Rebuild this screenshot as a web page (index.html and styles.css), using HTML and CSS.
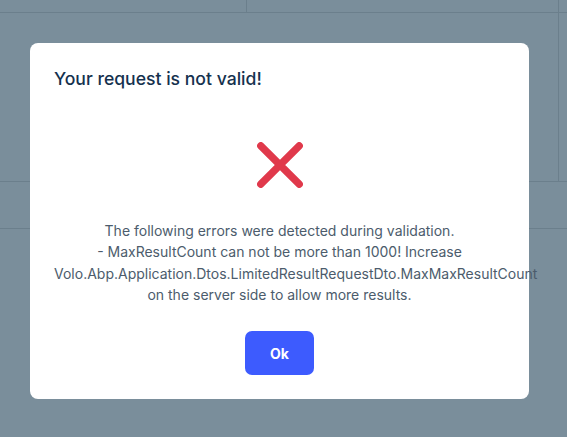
FILE: index.html
```html
<!DOCTYPE html>
<html lang="en">
<head>
<meta charset="utf-8">
<title>Validation error</title>
<link rel="stylesheet" href="styles.css">
</head>
<body>
<div class="page">
  <div class="row row-top">
    <div class="cell cell-a"></div>
    <div class="cell cell-b"></div>
    <div class="cell cell-c"></div>
  </div>
  <div class="row row-mid">
    <div class="cell cell-wide"></div>
    <div class="cell cell-c"></div>
  </div>
  <div class="row row-band"></div>
  <div class="row row-rest"></div>
</div>

<div class="modal" role="dialog">
  <h2 class="modal-title">Your request is not valid!</h2>
  <div class="modal-icon">
    <svg width="46" height="46" viewBox="0 0 46 46" aria-hidden="true">
      <path d="M3.8 3.8 L42.2 42.2 M42.2 3.8 L3.8 42.2" stroke="#e0394b" stroke-width="7.4" stroke-linecap="round" fill="none"/>
    </svg>
  </div>
  <p class="modal-text">The following errors were detected during validation.<br>- MaxResultCount can not be more than 1000! Increase Volo.Abp.Application.Dtos.LimitedResultRequestDto.MaxMaxResultCount on the server side to allow more results.</p>
  <div class="modal-actions">
    <button class="btn-ok" type="button">Ok</button>
  </div>
</div>
</body>
</html>
```
FILE: styles.css
```css
html, body {
  margin: 0;
  padding: 0;
  height: 100%;
}
body {
  background: #7a8e9b;
  font-family: Inter, "Noto Sans", "Liberation Sans", sans-serif;
  overflow: hidden;
}
.page {
  display: flex;
  flex-direction: column;
  height: 100%;
}
.row {
  display: flex;
  border-bottom: 1px solid #6b7f8c;
}
.row-top {
  height: 12px;
}
.row-mid {
  height: 168px;
}
.row-band {
  height: 46px;
}
.row-rest {
  flex: 1;
  border-bottom: none;
}
.cell {
  height: 100%;
}
.cell-a {
  width: 246px;
  border-right: 1px solid #6b7f8c;
}
.cell-b {
  width: 311px;
  border-right: 1px solid #6b7f8c;
}
.cell-wide {
  width: 558px;
  border-right: 1px solid #6b7f8c;
}
.cell-c {
  flex: 1;
}

.modal {
  position: absolute;
  left: 30px;
  top: 43px;
  width: 499px;
  box-sizing: border-box;
  background: #ffffff;
  border-radius: 8px;
  padding: 25px 24px 24px;
}
.modal-title {
  margin: 0;
  font-size: 17.6px;
  line-height: 22px;
  font-weight: 500;
  color: #15314e;
}
.modal-icon {
  display: flex;
  justify-content: center;
  margin-top: 52px;
  height: 46px;
}
.modal-icon svg {
  display: block;
}
.modal-text {
  margin: 32px 0 0;
  font-size: 14px;
  line-height: 21.3px;
  color: #4c5c6c;
  text-align: center;
}
.modal-actions {
  display: flex;
  justify-content: center;
  margin-top: 26px;
}
.btn-ok {
  width: 69px;
  height: 44px;
  border: none;
  border-radius: 7px;
  background: #3d5bfe;
  color: #ffffff;
  font-family: Inter, "Noto Sans", "Liberation Sans", sans-serif;
  font-size: 14px;
  font-weight: 700;
  padding: 0;
}
```
